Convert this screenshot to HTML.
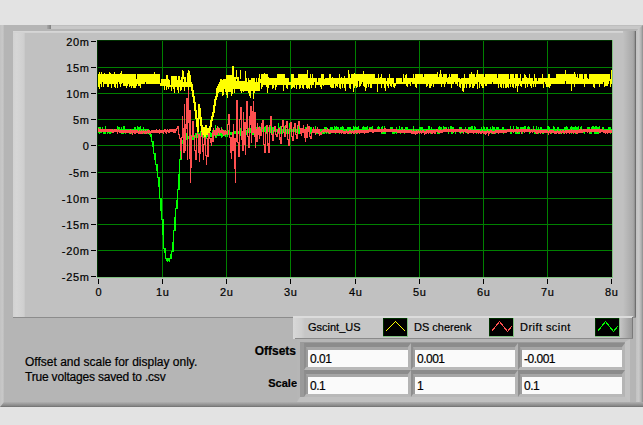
<!DOCTYPE html>
<html><head><meta charset="utf-8">
<style>
html,body{margin:0;padding:0;}
body{-webkit-text-stroke:0.2px #000;width:643px;height:425px;overflow:hidden;position:relative;background:#e3e3e3;font-family:"Liberation Sans",sans-serif;color:#000;}
.abs{position:absolute;}
.yl{position:absolute;left:40px;width:49.7px;text-align:right;font-size:11px;line-height:14px;letter-spacing:0.7px;}
.xl{position:absolute;top:285px;width:41.7px;text-align:center;font-size:11px;line-height:14px;letter-spacing:0.7px;}
.tk{position:absolute;background:#000;}
.lg{position:absolute;top:320px;font-size:11px;line-height:14px;}
.in{position:absolute;background:#fafafa;font-size:12px;line-height:14px;letter-spacing:-0.5px;}
.in span{position:absolute;left:2px;top:2px;}
</style></head><body>
<!-- outer frame -->
<div class="abs" style="left:0;top:25px;width:643px;height:382px;background:#b5b5b5;"></div>
<div class="abs" style="left:0;top:25px;width:4px;height:382px;background:linear-gradient(90deg,#c2c2c2,#c8c8c8 60%,#bdbdbd);"></div>
<div class="abs" style="left:51px;top:25px;width:592px;height:6px;background:linear-gradient(180deg,#bebebe 0,#bebebe 1px,#c8c8c8 1px,#c8c8c8 4px,#b4b4b4 4px,#b4b4b4 6px);"></div>
<div class="abs" style="left:47px;top:25px;width:4px;height:4px;background:linear-gradient(90deg,#a8a8a8,#808080);"></div>
<div class="abs" style="left:636px;top:25px;width:7px;height:382px;background:linear-gradient(90deg,#c2c2c2,#cacaca 40%,#b0b0b0 75%,#8c8c8c);clip-path:polygon(0 6px,7px 0,7px 100%,0 100%);"></div>
<div class="abs" style="left:0;top:402px;width:643px;height:5px;background:linear-gradient(180deg,#b0b0b0,#8a8a8a 70%,#6e6e6e);clip-path:polygon(4px 0,100% 0,100% 100%,0 100%);"></div>
<!-- graph panel -->
<div class="abs" style="left:13px;top:31px;width:623px;height:286px;background:#c1c1c1;"></div>
<div class="abs" style="left:13px;top:31px;width:12px;height:286px;background:linear-gradient(90deg,#d2d2d2,#d6d6d6 30%,#d0d0d0 85%,#c8c8c8);"></div>
<div class="abs" style="left:13px;top:31px;width:616px;height:2px;background:linear-gradient(180deg,#d8d8d8,#d0d0d0);clip-path:polygon(0 0,100% 0,calc(100% - 2px) 100%,0 100%);"></div>
<div class="abs" style="left:623px;top:31px;width:12px;height:286px;background:linear-gradient(90deg,#c1c1c1,#a8a8a8 85%,#8c8c8c);"></div>
<div class="abs" style="left:635px;top:31px;width:1px;height:287px;background:#6f6f6f;"></div>
<div class="abs" style="left:13px;top:317px;width:623px;height:1px;background:#8c8c8c;"></div>
<svg width="643" height="425" style="position:absolute;left:0;top:0">
<rect x="98" y="41" width="514" height="236" fill="#000"/>
<g stroke="#008000" stroke-width="1" shape-rendering="crispEdges">
<line x1="162.5" y1="41" x2="162.5" y2="277"/><line x1="226.5" y1="41" x2="226.5" y2="277"/><line x1="290.5" y1="41" x2="290.5" y2="277"/><line x1="355.5" y1="41" x2="355.5" y2="277"/><line x1="419.5" y1="41" x2="419.5" y2="277"/><line x1="483.5" y1="41" x2="483.5" y2="277"/><line x1="547.5" y1="41" x2="547.5" y2="277"/>
<line x1="98" y1="67.5" x2="612" y2="67.5"/><line x1="98" y1="93.5" x2="612" y2="93.5"/><line x1="98" y1="119.5" x2="612" y2="119.5"/><line x1="98" y1="145.5" x2="612" y2="145.5"/><line x1="98" y1="172.5" x2="612" y2="172.5"/><line x1="98" y1="198.5" x2="612" y2="198.5"/><line x1="98" y1="224.5" x2="612" y2="224.5"/><line x1="98" y1="250.5" x2="612" y2="250.5"/>
</g>
<g shape-rendering="crispEdges">
<path d="M98.5 127V133M99.5 127V134M100.5 127V133M101.5 129V133M102.5 127V132M103.5 129V134M104.5 129V134M105.5 126V134M106.5 129V132M107.5 129V134M108.5 129V133M109.5 129V134M110.5 129V134M111.5 129V133M112.5 129V133M113.5 129V132M114.5 129V132M115.5 129V132M116.5 129V132M117.5 126V134M118.5 127V132M119.5 127V133M120.5 129V132M121.5 127V134M122.5 129V134M123.5 126V134M124.5 126V133M125.5 129V134M126.5 129V133M127.5 129V133M128.5 129V132M129.5 129V134M130.5 129V132M131.5 129V134M132.5 129V134M133.5 129V132M134.5 127V133M135.5 127V134M136.5 129V133M137.5 126V132M138.5 127V132M139.5 127V132M140.5 126V134M141.5 129V133M142.5 129V133M143.5 127V134M144.5 129V134M145.5 129V134M146.5 129V134M147.5 129V134M148.5 129V133M184.5 136V141M185.5 134V141M186.5 133V140M187.5 136V140M188.5 136V139M189.5 135V138M190.5 133V138M191.5 135V138M192.5 135V140M193.5 135V140M194.5 135V140M195.5 133V138M196.5 133V138M197.5 133V138M198.5 127V140M199.5 133V140M200.5 131V138M201.5 132V137M202.5 134V139M203.5 134V138M204.5 134V139M205.5 130V137M206.5 134V139M207.5 132V137M208.5 130V137M209.5 132V139M210.5 132V137M211.5 133V137M212.5 130V138M213.5 130V136M214.5 131V136M215.5 125V138M216.5 133V138M217.5 127V136M218.5 127V136M219.5 131V136M220.5 133V136M221.5 127V138M222.5 129V137M223.5 130V135M224.5 130V136M225.5 132V137M226.5 132V135M227.5 132V137M228.5 130V135M229.5 126V135M230.5 132V135M231.5 132V135M232.5 132V136M233.5 131V134M234.5 131V134M235.5 131V134M236.5 131V134M237.5 129V135M238.5 131V134M239.5 131V136M240.5 128V136M241.5 131V135M242.5 131V134M243.5 131V134M244.5 127V133M245.5 130V135M246.5 130V135M247.5 127V133M248.5 128V133M249.5 128V135M250.5 128V133M251.5 127V133M252.5 130V135M253.5 130V135M254.5 128V135M255.5 127V134M256.5 127V132M257.5 127V134M258.5 129V134M259.5 126V132M260.5 127V132M261.5 126V133M262.5 126V132M263.5 127V134M264.5 127V132M265.5 126V134M266.5 126V134M267.5 126V133M268.5 127V132M269.5 129V132M270.5 126V133M271.5 127V134M272.5 127V134M273.5 127V132M274.5 129V132M275.5 129V132M276.5 129V132M277.5 129V132M278.5 123V134M279.5 127V132M280.5 126V134M281.5 129V133M282.5 129V134M283.5 129V132M284.5 126V132M285.5 129V132M286.5 129V134M287.5 123V133M288.5 129V134M289.5 123V132M290.5 129V132M291.5 127V132M292.5 129V132M293.5 129V132M294.5 126V132M295.5 129V132M296.5 129V133M297.5 127V134M298.5 122V134M299.5 127V134M300.5 129V134M301.5 129V134M302.5 129V132M303.5 129V132M304.5 129V134M305.5 127V132M306.5 127V132M307.5 129V133M308.5 129V132M309.5 129V134M310.5 127V134M311.5 127V134M312.5 129V133M313.5 129V132M314.5 129V132M315.5 126V134M316.5 129V134M317.5 129V134M318.5 129V132M319.5 129V132M320.5 129V132M321.5 129V132M322.5 129V134M323.5 129V134M324.5 127V134M325.5 127V133M326.5 127V134M327.5 129V133M328.5 129V134M329.5 129V133M330.5 127V134M331.5 127V132M332.5 127V132M333.5 129V132M334.5 126V132M335.5 127V134M336.5 126V132M337.5 127V133M338.5 127V132M339.5 129V134M340.5 127V133M341.5 127V133M342.5 126V132M343.5 127V132M344.5 129V132M345.5 129V132M346.5 129V133M347.5 127V132M348.5 127V132M349.5 127V134M350.5 127V134M351.5 129V134M352.5 129V132M353.5 126V132M354.5 127V133M355.5 126V133M356.5 127V134M357.5 127V134M358.5 126V132M359.5 129V132M360.5 129V132M361.5 129V132M362.5 127V133M363.5 126V132M364.5 127V134M365.5 127V132M366.5 127V132M367.5 126V132M368.5 129V132M369.5 127V132M370.5 127V132M371.5 127V132M372.5 126V132M373.5 129V132M374.5 129V132M375.5 129V132M376.5 129V132M377.5 127V132M378.5 126V132M379.5 127V132M380.5 129V132M381.5 127V134M382.5 126V134M383.5 129V134M384.5 126V134M385.5 129V134M386.5 129V132M387.5 129V132M388.5 129V132M389.5 129V132M390.5 127V132M391.5 127V132M392.5 127V134M393.5 129V134M394.5 129V134M395.5 129V133M396.5 127V134M397.5 129V132M398.5 129V132M399.5 126V132M400.5 129V134M401.5 127V132M402.5 127V132M403.5 129V133M404.5 129V134M405.5 127V132M406.5 127V132M407.5 127V132M408.5 129V132M409.5 129V133M410.5 129V132M411.5 129V132M412.5 129V132M413.5 126V132M414.5 129V132M415.5 129V132M416.5 129V132M417.5 129V134M418.5 129V133M419.5 127V132M420.5 127V132M421.5 127V134M422.5 127V132M423.5 129V132M424.5 129V132M425.5 129V132M426.5 129V132M427.5 129V132M428.5 126V132M429.5 126V132M430.5 129V134M431.5 127V134M432.5 129V133M433.5 129V133M434.5 129V133M435.5 129V134M436.5 129V132M437.5 129V134M438.5 127V134M439.5 126V134M440.5 127V132M441.5 127V132M442.5 129V132M443.5 126V132M444.5 127V132M445.5 127V132M446.5 127V132M447.5 129V132M448.5 127V134M449.5 129V132M450.5 126V132M451.5 126V134M452.5 127V134M453.5 127V132M454.5 129V132M455.5 129V134M456.5 129V132M457.5 129V132M458.5 129V132M459.5 127V133M460.5 127V134M461.5 127V133M462.5 129V133M463.5 129V133M464.5 129V132M465.5 127V133M466.5 129V132M467.5 129V134M468.5 127V132M469.5 127V132M470.5 127V132M471.5 126V132M472.5 126V133M473.5 129V132M474.5 126V132M475.5 127V132M476.5 129V134M477.5 129V132M478.5 129V133M479.5 129V132M480.5 129V132M481.5 127V132M482.5 129V132M483.5 126V132M484.5 127V133M485.5 129V132M486.5 127V132M487.5 127V132M488.5 129V132M489.5 129V132M490.5 127V132M491.5 129V134M492.5 126V133M493.5 127V134M494.5 127V132M495.5 129V134M496.5 127V132M497.5 127V132M498.5 127V132M499.5 129V132M500.5 129V133M501.5 129V132M502.5 127V132M503.5 127V134M504.5 129V132M505.5 129V132M506.5 129V132M507.5 129V132M508.5 129V132M509.5 129V132M510.5 126V134M511.5 129V134M512.5 129V132M513.5 126V132M514.5 129V132M515.5 129V134M516.5 126V134M517.5 127V134M518.5 127V134M519.5 129V134M520.5 127V132M521.5 127V134M522.5 127V134M523.5 127V132M524.5 126V132M525.5 126V132M526.5 129V132M527.5 127V132M528.5 126V132M529.5 127V134M530.5 129V132M531.5 129V132M532.5 129V132M533.5 126V132M534.5 129V134M535.5 129V134M536.5 126V132M537.5 129V134M538.5 127V134M539.5 129V132M540.5 127V132M541.5 127V132M542.5 129V134M543.5 129V134M544.5 129V133M545.5 129V132M546.5 129V132M547.5 126V132M548.5 126V134M549.5 127V132M550.5 129V132M551.5 129V134M552.5 129V133M553.5 126V132M554.5 127V133M555.5 129V134M556.5 129V132M557.5 127V133M558.5 127V134M559.5 129V134M560.5 129V134M561.5 129V134M562.5 129V132M563.5 129V134M564.5 127V134M565.5 127V132M566.5 126V132M567.5 127V132M568.5 129V132M569.5 129V133M570.5 127V132M571.5 126V134M572.5 127V133M573.5 127V134M574.5 127V132M575.5 126V134M576.5 127V132M577.5 127V132M578.5 126V132M579.5 129V133M580.5 127V133M581.5 126V132M582.5 129V132M583.5 129V133M584.5 129V134M585.5 129V132M586.5 129V132M587.5 127V132M588.5 127V132M589.5 127V134M590.5 129V134M591.5 127V134M592.5 126V132M593.5 126V132M594.5 127V134M595.5 126V134M596.5 126V134M597.5 127V134M598.5 127V134M599.5 126V132M600.5 129V132M601.5 129V132M602.5 127V132M603.5 127V132M604.5 129V132M605.5 129V132M606.5 129V132M607.5 129V134M608.5 127V132M609.5 127V132M610.5 127V134M611.5 129V132" stroke="#00ff00" stroke-width="1" fill="none"/>
</g>
<path d="M148.5 132V133M149.5 132V135M150.5 134V137M151.5 136V142M152.5 141V147M153.5 146V154M154.5 153V160M155.5 159V165M156.5 164V171M157.5 170V178M158.5 177V187M159.5 186V199M160.5 198V211M161.5 210V220M162.5 219V235M163.5 234V249M164.5 248V253M165.5 252V259M166.5 258V261M167.5 260V262M168.5 258V261M169.5 258V262M170.5 254V259M171.5 251V255M172.5 242V252M173.5 230V243M174.5 217V231M175.5 208V218M176.5 200V209M177.5 189V201M178.5 174V190M179.5 159V175M180.5 148V160M181.5 143V149M182.5 140V144M183.5 138V141M184.5 138V141M185.5 140V141" stroke="#00ff00" stroke-width="1" fill="none" shape-rendering="crispEdges"/><path d="M148.5 132V133M150.5 134V137M152.5 141V147M154.5 153V160M156.5 164V171M158.5 177V187M160.5 198V211M162.5 219V235M164.5 248V253M166.5 258V261M168.5 258V261M170.5 254V259M172.5 242V252M174.5 217V231M176.5 200V209M178.5 174V190M180.5 148V160M182.5 140V144M184.5 138V141" transform="translate(1,0)" stroke="#00ff00" stroke-width="1" fill="none" shape-rendering="crispEdges"/>
<g shape-rendering="crispEdges">
<path d="M98.5 128V132M99.5 129V132M100.5 129V132M101.5 129V132M102.5 129V132M103.5 129V132M104.5 129V132M105.5 129V132M106.5 129V132M107.5 129V132M108.5 129V132M109.5 129V132M110.5 129V132M111.5 129V132M112.5 129V133M113.5 130V133M114.5 129V132M115.5 129V132M116.5 129V132M117.5 130V134M118.5 129V132M119.5 130V133M120.5 130V133M121.5 130V133M122.5 130V133M123.5 130V133M124.5 130V133M125.5 130V133M126.5 130V133M127.5 130V133M128.5 130V133M129.5 130V133M130.5 129V134M131.5 130V133M132.5 130V135M133.5 130V133M134.5 130V134M135.5 130V134M136.5 130V133M137.5 130V133M138.5 131V134M139.5 130V134M140.5 131V134M141.5 130V134M142.5 131V134M143.5 130V133M144.5 131V134M145.5 130V134M146.5 131V134M147.5 130V133M148.5 130V134M149.5 130V133M150.5 131V134M151.5 130V133M152.5 130V133M153.5 130V133M154.5 130V133M155.5 130V133M156.5 129V133M157.5 130V133M158.5 130V133M159.5 129V134M160.5 130V133M161.5 130V133M162.5 130V133M163.5 130V134M164.5 129V132M165.5 129V133M166.5 130V134M167.5 129V132M168.5 130V133M169.5 129V133M170.5 129V132M171.5 129V132M172.5 129V132M173.5 129V133M174.5 129V133M175.5 129V133M323.5 129V133M324.5 129V132M325.5 129V132M326.5 130V133M327.5 128V132M328.5 129V133M329.5 130V134M330.5 130V133M331.5 130V133M332.5 130V133M333.5 130V133M334.5 130V133M335.5 130V133M336.5 129V133M337.5 130V133M338.5 130V133M339.5 130V133M340.5 130V133M341.5 130V134M342.5 130V133M343.5 131V134M344.5 131V134M345.5 131V134M346.5 130V133M347.5 131V134M348.5 131V134M349.5 130V133M350.5 130V133M351.5 131V134M352.5 130V133M353.5 131V134M354.5 130V134M355.5 130V133M356.5 130V134M357.5 130V133M358.5 130V133M359.5 130V134M360.5 130V133M361.5 130V133M362.5 130V133M363.5 130V133M364.5 130V134M365.5 130V133M366.5 130V133M367.5 130V133M368.5 130V133M369.5 128V132M370.5 129V132M371.5 129V132M372.5 129V133M373.5 130V133M374.5 129V132M375.5 129V132M376.5 129V132M377.5 129V132M378.5 129V132M379.5 129V132M380.5 129V132M381.5 129V133M382.5 129V132M383.5 129V132M384.5 128V132M385.5 128V132M386.5 129V132M387.5 129V132M388.5 129V132M389.5 129V132M390.5 129V132M391.5 129V132M392.5 129V132M393.5 129V132M394.5 129V132M395.5 129V132M396.5 129V132M397.5 130V133M398.5 130V133M399.5 130V133M400.5 130V133M401.5 130V133M402.5 129V133M403.5 130V133M404.5 129V133M405.5 130V133M406.5 130V133M407.5 130V133M408.5 130V133M409.5 130V133M410.5 130V133M411.5 130V134M412.5 131V134M413.5 129V134M414.5 131V134M415.5 131V135M416.5 130V134M417.5 131V134M418.5 130V133M419.5 131V134M420.5 130V133M421.5 131V134M422.5 130V133M423.5 130V133M424.5 131V135M425.5 131V134M426.5 130V134M427.5 130V133M428.5 130V134M429.5 130V133M430.5 130V133M431.5 130V134M432.5 130V134M433.5 130V133M434.5 130V134M435.5 130V134M436.5 129V132M437.5 129V132M438.5 130V133M439.5 130V133M440.5 129V133M441.5 130V133M442.5 130V133M443.5 129V132M444.5 129V132M445.5 129V132M446.5 128V132M447.5 129V132M448.5 129V132M449.5 129V132M450.5 129V132M451.5 129V132M452.5 129V132M453.5 129V133M454.5 129V132M455.5 129V132M456.5 129V132M457.5 129V132M458.5 129V132M459.5 129V132M460.5 129V133M461.5 129V132M462.5 129V132M463.5 130V134M464.5 129V132M465.5 129V132M466.5 129V133M467.5 129V133M468.5 130V134M469.5 130V133M470.5 129V133M471.5 130V133M472.5 130V133M473.5 130V134M474.5 130V133M475.5 130V133M476.5 130V133M477.5 130V133M478.5 130V134M479.5 130V133M480.5 131V134M481.5 131V134M482.5 130V133M483.5 131V134M484.5 131V134M485.5 131V135M486.5 131V134M487.5 130V133M488.5 131V136M489.5 131V134M490.5 130V133M491.5 130V133M492.5 131V134M493.5 131V134M494.5 131V134M495.5 130V133M496.5 130V133M497.5 130V133M498.5 130V134M499.5 130V133M500.5 130V133M501.5 130V133M502.5 130V133M503.5 130V133M504.5 130V133M505.5 130V133M506.5 130V133M507.5 129V132M508.5 129V132M509.5 129V132M510.5 129V132M511.5 129V132M512.5 129V132M513.5 130V133M514.5 129V132M515.5 129V132M516.5 129V132M517.5 129V133M518.5 129V132M519.5 129V132M520.5 129V132M521.5 129V134M522.5 129V132M523.5 129V132M524.5 129V133M525.5 129V132M526.5 129V132M527.5 129V132M528.5 129V132M529.5 129V132M530.5 130V133M531.5 129V132M532.5 130V133M533.5 129V132M534.5 129V132M535.5 130V133M536.5 130V134M537.5 130V134M538.5 130V133M539.5 130V133M540.5 130V134M541.5 130V133M542.5 130V133M543.5 130V133M544.5 130V133M545.5 130V133M546.5 130V133M547.5 130V133M548.5 131V135M549.5 130V133M550.5 130V134M551.5 130V133M552.5 130V133M553.5 130V133M554.5 131V134M555.5 131V134M556.5 131V134M557.5 130V133M558.5 131V134M559.5 131V134M560.5 130V133M561.5 131V134M562.5 130V133M563.5 130V133M564.5 131V134M565.5 130V133M566.5 130V134M567.5 130V133M568.5 130V133M569.5 130V134M570.5 130V133M571.5 129V133M572.5 130V133M573.5 130V134M574.5 130V133M575.5 130V133M576.5 130V134M577.5 130V134M578.5 130V133M579.5 129V133M580.5 129V133M581.5 129V133M582.5 130V133M583.5 129V132M584.5 129V132M585.5 129V132M586.5 129V132M587.5 129V133M588.5 129V132M589.5 129V133M590.5 129V132M591.5 129V132M592.5 129V132M593.5 129V132M594.5 129V132M595.5 129V132M596.5 129V132M597.5 129V132M598.5 129V132M599.5 129V133M600.5 129V133M601.5 129V132M602.5 129V132M603.5 130V133M604.5 130V133M605.5 130V134M606.5 130V133M607.5 130V134M608.5 130V133M609.5 130V133M610.5 130V133M611.5 130V133" stroke="#ff5050" stroke-width="1" fill="none"/>
</g>
<path d="M175.5 130V132M176.5 128V131M177.5 126V129M178.5 128V135M179.5 134V139M180.5 138V151M181.5 137V159M182.5 116V138M183.5 128V153M184.5 104V129M185.5 124V151M186.5 98V129M187.5 122V160M188.5 86V123M189.5 110V159M190.5 158V183M191.5 136V168M192.5 121V137M193.5 126V137M194.5 136V151M195.5 150V160M196.5 134V151M197.5 125V135M198.5 134V153M199.5 152V162M200.5 136V154M201.5 128V137M202.5 136V152M203.5 144V160M204.5 128V145M205.5 137V156M206.5 155V165M207.5 138V157M208.5 130V139M209.5 132V139M210.5 138V143M211.5 141V146M212.5 132V142M213.5 128V133M214.5 130V135M215.5 134V137M216.5 128V135M217.5 126V129M218.5 128V133M219.5 132V135M220.5 130V133M221.5 128V131M222.5 130V134M223.5 133V136M224.5 131V135M225.5 130V132M226.5 131V134M227.5 124V135M228.5 114V125M229.5 122V138M230.5 137V153M231.5 150V159M232.5 132V151M233.5 124V139M234.5 138V169M235.5 141V183M236.5 100V142M237.5 114V143M238.5 142V157M239.5 119V145M240.5 107V120M241.5 118V140M242.5 131V151M243.5 112V132M244.5 122V145M245.5 128V155M246.5 101V129M247.5 112V137M248.5 136V148M249.5 116V138M250.5 106V125M251.5 124V143M252.5 111V133M253.5 101V113M254.5 112V137M255.5 136V148M256.5 129V142M257.5 123V130M258.5 127V135M259.5 134V139M260.5 129V136M261.5 123V130M262.5 120V129M263.5 128V145M264.5 144V153M265.5 132V146M266.5 125V133M267.5 132V146M268.5 143V153M269.5 125V144M270.5 116V126M271.5 122V135M272.5 134V141M273.5 130V137M274.5 126V131M275.5 128V135M276.5 134V137M277.5 130V135M278.5 128V133M279.5 132V140M280.5 137V144M281.5 126V138M282.5 120V127M283.5 124V133M284.5 132V137M285.5 125V133M286.5 121V128M287.5 127V140M288.5 139V146M289.5 128V140M290.5 122V129M291.5 126V137M292.5 136V141M293.5 127V137M294.5 123V128M295.5 127V135M296.5 134V139M297.5 125V135M298.5 121V126M299.5 123V129M300.5 128V134M301.5 132V136M302.5 128V133M303.5 125V130M304.5 129V138M305.5 137V142M306.5 128V138M307.5 124V129M308.5 126V132M309.5 131V137M310.5 136V139M311.5 132V137M312.5 129V133M313.5 127V130M314.5 129V133M315.5 132V135M316.5 129V133M317.5 127V130M318.5 129V134M319.5 133V136M320.5 132V135M321.5 131V133M322.5 130V132M323.5 130V131" stroke="#ff5050" stroke-width="1" fill="none" shape-rendering="crispEdges"/><path d="M177.5 126V129M180.5 138V151M183.5 128V153M186.5 98V129M189.5 110V159M192.5 121V137M195.5 150V160M198.5 134V153M201.5 128V137M204.5 128V145M207.5 138V157M210.5 138V143M212.5 132V142M214.5 130V135M216.5 128V135M218.5 128V133M220.5 130V133M222.5 130V134M224.5 131V135M226.5 131V134M228.5 114V125M230.5 137V153M232.5 132V151M234.5 138V169M236.5 100V142M238.5 142V157M240.5 107V120M242.5 131V151M244.5 122V145M246.5 101V129M248.5 136V148M250.5 106V125M252.5 111V133M254.5 112V137M256.5 129V142M258.5 127V135M260.5 129V136M262.5 120V129M264.5 144V153M266.5 125V133M268.5 143V153M270.5 116V126M272.5 134V141M274.5 126V131M276.5 134V137M278.5 128V133M280.5 137V144M282.5 120V127M284.5 132V137M286.5 121V128M288.5 139V146M290.5 122V129M292.5 136V141M294.5 123V128M296.5 134V139M298.5 121V126M300.5 128V134M302.5 128V133M304.5 129V138M306.5 128V138M308.5 126V132M310.5 136V139M312.5 129V133M314.5 129V133M316.5 129V133M318.5 129V134M320.5 132V135M322.5 130V132" transform="translate(1,0)" stroke="#ff5050" stroke-width="1" fill="none" shape-rendering="crispEdges"/>
<g shape-rendering="crispEdges">
<path d="M98.5 74V87M99.5 72V89M100.5 74V84M101.5 72V87M102.5 74V82M103.5 74V87M104.5 73V84M105.5 74V84M106.5 74V84M107.5 74V87M108.5 74V87M109.5 72V84M110.5 73V84M111.5 74V88M112.5 74V84M113.5 74V84M114.5 72V87M115.5 74V88M116.5 74V84M117.5 74V88M118.5 74V82M119.5 74V84M120.5 73V87M121.5 71V84M122.5 74V83M123.5 74V86M124.5 74V86M125.5 74V86M126.5 74V88M127.5 74V86M128.5 74V84M129.5 74V87M130.5 74V86M131.5 74V88M132.5 74V86M133.5 74V88M134.5 74V88M135.5 74V88M136.5 79V86M137.5 74V84M138.5 74V86M139.5 74V86M140.5 74V88M141.5 74V84M142.5 74V84M143.5 74V84M144.5 74V84M145.5 74V82M146.5 74V84M147.5 74V84M148.5 74V84M149.5 74V84M150.5 74V84M151.5 74V84M152.5 74V84M153.5 74V84M154.5 72V84M155.5 74V84M156.5 74V84M157.5 74V84M158.5 74V84M159.5 74V84M160.5 83V86M161.5 79V86M162.5 79V86M163.5 79V86M164.5 79V90M165.5 79V86M166.5 75V90M167.5 75V87M168.5 79V89M169.5 80V87M170.5 85V87M171.5 76V91M172.5 76V87M173.5 76V89M174.5 76V93M175.5 76V87M176.5 76V87M177.5 80V90M178.5 76V87M179.5 76V87M180.5 80V91M181.5 77V90M182.5 73V87M183.5 82V87M184.5 77V91M185.5 77V87M186.5 82V87M187.5 73V87M188.5 73V90M189.5 73V87M190.5 75V87M216.5 88V92M217.5 86V95M218.5 84V92M219.5 82V92M220.5 79V92M221.5 79V92M222.5 83V96M223.5 79V95M224.5 79V89M225.5 79V92M226.5 75V95M227.5 75V98M228.5 75V92M229.5 75V92M230.5 75V92M231.5 75V96M232.5 75V94M233.5 77V89M234.5 77V93M235.5 77V89M236.5 81V89M237.5 77V89M238.5 77V89M239.5 81V89M240.5 81V91M241.5 81V93M242.5 81V91M243.5 81V92M244.5 81V91M245.5 77V91M246.5 78V91M247.5 82V91M248.5 78V93M249.5 82V94M250.5 82V91M251.5 78V91M252.5 78V91M253.5 78V99M254.5 78V93M255.5 82V91M256.5 78V91M257.5 82V91M258.5 78V91M259.5 74V91M260.5 79V83M261.5 74V89M262.5 74V87M263.5 74V85M264.5 73V85M265.5 74V85M266.5 74V87M267.5 74V93M268.5 77V88M269.5 78V85M270.5 78V85M271.5 78V85M272.5 78V89M273.5 78V88M274.5 78V85M275.5 78V90M276.5 78V87M277.5 74V85M278.5 74V85M279.5 74V85M280.5 74V85M281.5 74V85M282.5 74V85M283.5 74V91M284.5 74V85M285.5 78V85M286.5 78V88M287.5 78V89M288.5 78V85M289.5 82V85M290.5 82V85M291.5 74V89M292.5 74V88M293.5 74V87M294.5 78V88M295.5 78V85M296.5 78V89M297.5 78V85M298.5 74V85M299.5 74V89M300.5 74V88M301.5 74V85M302.5 74V88M303.5 74V89M304.5 74V85M305.5 74V85M306.5 74V88M307.5 78V89M308.5 78V88M309.5 78V89M310.5 74V85M311.5 78V88M312.5 74V85M313.5 78V85M314.5 78V82M315.5 78V88M316.5 78V85M317.5 82V85M318.5 78V85M319.5 78V85M320.5 78V87M321.5 74V89M322.5 74V85M323.5 74V86M324.5 79V85M325.5 78V85M326.5 78V85M327.5 78V85M328.5 78V85M329.5 74V85M330.5 74V87M331.5 78V88M332.5 77V88M333.5 78V88M334.5 78V84M335.5 78V88M336.5 78V86M337.5 78V87M338.5 78V84M339.5 74V88M340.5 78V89M341.5 77V84M342.5 78V88M343.5 78V84M344.5 76V88M345.5 78V91M346.5 78V84M347.5 78V84M348.5 70V84M349.5 74V88M350.5 78V89M351.5 74V84M352.5 74V84M353.5 74V92M354.5 73V88M355.5 74V86M356.5 74V88M357.5 74V87M358.5 74V81M359.5 74V87M360.5 74V86M361.5 74V84M362.5 74V82M363.5 71V86M364.5 74V87M365.5 74V91M366.5 74V88M367.5 74V84M368.5 74V87M369.5 74V84M370.5 74V88M371.5 74V88M372.5 74V84M373.5 74V84M374.5 74V84M375.5 78V84M376.5 78V84M377.5 78V84M378.5 74V84M379.5 78V84M380.5 77V84M381.5 74V88M382.5 78V84M383.5 78V84M384.5 78V88M385.5 78V91M386.5 81V84M387.5 78V86M388.5 78V88M389.5 74V84M390.5 78V86M391.5 78V87M392.5 78V84M393.5 78V87M394.5 83V88M395.5 83V86M396.5 78V84M397.5 78V84M398.5 78V84M399.5 78V84M400.5 78V84M401.5 78V84M402.5 82V84M403.5 74V84M404.5 78V84M405.5 75V84M406.5 74V86M407.5 78V87M408.5 78V84M409.5 78V84M410.5 78V86M411.5 78V82M412.5 78V84M413.5 74V84M414.5 78V84M415.5 74V87M416.5 74V88M417.5 74V84M418.5 74V84M419.5 74V84M420.5 74V84M421.5 74V84M422.5 74V84M423.5 77V84M424.5 74V84M425.5 74V84M426.5 74V87M427.5 74V86M428.5 74V84M429.5 74V88M430.5 74V88M431.5 74V86M432.5 74V84M433.5 74V87M434.5 74V84M435.5 74V84M436.5 74V84M437.5 72V84M438.5 77V84M439.5 74V84M440.5 70V84M441.5 74V87M442.5 77V84M443.5 74V84M444.5 74V87M445.5 74V84M446.5 74V82M447.5 78V84M448.5 77V84M449.5 74V84M450.5 77V84M451.5 74V88M452.5 74V84M453.5 74V84M454.5 74V82M455.5 74V84M456.5 74V84M457.5 74V86M458.5 78V82M459.5 78V87M460.5 79V88M461.5 78V84M462.5 78V91M463.5 78V92M464.5 74V88M465.5 78V84M466.5 78V88M467.5 78V84M468.5 78V84M469.5 74V88M470.5 74V87M471.5 72V84M472.5 74V88M473.5 74V88M474.5 74V86M475.5 77V84M476.5 74V84M477.5 74V89M478.5 74V82M479.5 74V88M480.5 74V84M481.5 74V86M482.5 74V88M483.5 74V88M484.5 77V84M485.5 74V86M486.5 74V86M487.5 74V84M488.5 74V84M489.5 74V84M490.5 74V84M491.5 74V84M492.5 74V82M493.5 74V84M494.5 74V84M495.5 74V84M496.5 74V84M497.5 78V84M498.5 74V88M499.5 74V84M500.5 74V87M501.5 74V88M502.5 74V84M503.5 74V88M504.5 74V84M505.5 74V88M506.5 74V88M507.5 74V87M508.5 74V88M509.5 79V84M510.5 74V87M511.5 74V84M512.5 74V87M513.5 74V88M514.5 78V84M515.5 74V88M516.5 74V86M517.5 74V92M518.5 78V86M519.5 78V84M520.5 74V86M521.5 81V87M522.5 78V84M523.5 78V84M524.5 74V84M525.5 75V88M526.5 77V84M527.5 78V87M528.5 78V84M529.5 74V84M530.5 78V86M531.5 78V88M532.5 78V84M533.5 81V87M534.5 74V84M535.5 78V87M536.5 78V84M537.5 81V84M538.5 78V84M539.5 78V84M540.5 78V84M541.5 78V84M542.5 74V84M543.5 78V88M544.5 78V82M545.5 78V84M546.5 78V87M547.5 78V87M548.5 74V87M549.5 74V88M550.5 78V86M551.5 78V84M552.5 78V84M553.5 78V84M554.5 78V84M555.5 78V84M556.5 74V84M557.5 74V84M558.5 74V84M559.5 74V84M560.5 74V84M561.5 74V84M562.5 74V84M563.5 74V84M564.5 74V84M565.5 70V81M566.5 74V84M567.5 74V84M568.5 74V84M569.5 74V84M570.5 74V84M571.5 74V91M572.5 74V84M573.5 74V84M574.5 72V87M575.5 74V84M576.5 77V84M577.5 74V84M578.5 78V84M579.5 74V84M580.5 74V84M581.5 74V84M582.5 74V84M583.5 79V84M584.5 74V87M585.5 74V84M586.5 74V84M587.5 78V84M588.5 79V84M589.5 74V84M590.5 74V84M591.5 74V84M592.5 74V84M593.5 74V87M594.5 74V88M595.5 74V84M596.5 74V84M597.5 74V84M598.5 74V84M599.5 74V87M600.5 74V84M601.5 74V84M602.5 74V84M603.5 74V82M604.5 74V87M605.5 74V86M606.5 74V86M607.5 74V86M608.5 74V84M609.5 74V81M610.5 79V87M611.5 79V84M182.5 70V79M183.5 71V79M188.5 70V79M189.5 71V79M232.5 66V79M233.5 66V79M236.5 70V79M240.5 70V79M245.5 71V79M307.5 70V79M477.5 70V79M611.5 70V79M377.5 80V92M250.5 80V98M249.5 80V96M253.5 80V97M178.5 80V93" stroke="#ffff00" stroke-width="1" fill="none"/>
</g>
<path d="M188.5 80V82M189.5 81V83M190.5 82V85M191.5 84V91M192.5 90V97M193.5 96V103M194.5 102V111M195.5 110V119M196.5 118V127M197.5 118V132M198.5 104V119M199.5 108V118M200.5 117V126M201.5 125V132M202.5 130V135M203.5 127V133M204.5 130V137M205.5 125V131M206.5 130V135M207.5 128V132M208.5 130V133M209.5 126V131M210.5 120V127M211.5 116V121M212.5 112V117M213.5 105V113M214.5 99V106M215.5 96V100M216.5 92V97M217.5 89V93M218.5 86V90M219.5 84V87M220.5 83V85M221.5 81V84M222.5 80V82" stroke="#ffff00" stroke-width="1" fill="none" shape-rendering="crispEdges"/><path d="M188.5 80V82M189.5 81V83M190.5 82V85M191.5 84V91M192.5 90V97M193.5 96V103M194.5 102V111M195.5 110V119M196.5 118V127M197.5 118V132M198.5 104V119M199.5 108V118M200.5 117V126M201.5 125V132M202.5 130V135M203.5 127V133M204.5 130V137M205.5 125V131M206.5 130V135M207.5 128V132M208.5 130V133M209.5 126V131M210.5 120V127M211.5 116V121M212.5 112V117M213.5 105V113M214.5 99V106M215.5 96V100M216.5 92V97M217.5 89V93M218.5 86V90M219.5 84V87M220.5 83V85M221.5 81V84M222.5 80V82" transform="translate(1,0)" stroke="#ffff00" stroke-width="1" fill="none" shape-rendering="crispEdges"/>
<g shape-rendering="crispEdges">
<rect x="97" y="40" width="516" height="1" fill="#003000"/>
<rect x="97" y="40" width="1" height="238" fill="#003000"/>
<rect x="97" y="277" width="516" height="1" fill="#80c080"/>
<rect x="612" y="40" width="1" height="238" fill="#80c080"/>
</g>
</svg>
<div class="yl" style="top:35px">20m</div><div class="tk" style="left:91px;top:41px;width:5px;height:1px"></div><div class="yl" style="top:61px">15m</div><div class="tk" style="left:91px;top:67px;width:5px;height:1px"></div><div class="yl" style="top:87px">10m</div><div class="tk" style="left:91px;top:93px;width:5px;height:1px"></div><div class="yl" style="top:113px">5m</div><div class="tk" style="left:91px;top:119px;width:5px;height:1px"></div><div class="yl" style="top:139px">0</div><div class="tk" style="left:91px;top:145px;width:5px;height:1px"></div><div class="yl" style="top:166px">-5m</div><div class="tk" style="left:91px;top:172px;width:5px;height:1px"></div><div class="yl" style="top:192px">-10m</div><div class="tk" style="left:91px;top:198px;width:5px;height:1px"></div><div class="yl" style="top:218px">-15m</div><div class="tk" style="left:91px;top:224px;width:5px;height:1px"></div><div class="yl" style="top:244px">-20m</div><div class="tk" style="left:91px;top:250px;width:5px;height:1px"></div><div class="yl" style="top:270px">-25m</div><div class="tk" style="left:91px;top:276px;width:5px;height:1px"></div>
<div class="xl" style="left:78px">0</div><div class="tk" style="left:98px;top:279px;width:1px;height:5px"></div><div class="xl" style="left:142px">1u</div><div class="tk" style="left:162px;top:279px;width:1px;height:5px"></div><div class="xl" style="left:206px">2u</div><div class="tk" style="left:226px;top:279px;width:1px;height:5px"></div><div class="xl" style="left:270px">3u</div><div class="tk" style="left:290px;top:279px;width:1px;height:5px"></div><div class="xl" style="left:335px">4u</div><div class="tk" style="left:355px;top:279px;width:1px;height:5px"></div><div class="xl" style="left:399px">5u</div><div class="tk" style="left:419px;top:279px;width:1px;height:5px"></div><div class="xl" style="left:463px">6u</div><div class="tk" style="left:483px;top:279px;width:1px;height:5px"></div><div class="xl" style="left:527px">7u</div><div class="tk" style="left:547px;top:279px;width:1px;height:5px"></div><div class="xl" style="left:591px">8u</div><div class="tk" style="left:611px;top:279px;width:1px;height:5px"></div>
<!-- legend -->
<div class="abs" style="left:293px;top:316px;width:340px;height:23px;background:#c6c6c6;"></div>
<div class="abs" style="left:293px;top:316px;width:12px;height:23px;background:linear-gradient(90deg,#d8d8d8,#cfcfcf 70%,#c6c6c6);"></div>
<div class="abs" style="left:293px;top:316px;width:340px;height:2px;background:#dcdcdc;"></div>
<div class="abs" style="left:620px;top:318px;width:12px;height:21px;background:linear-gradient(90deg,#c6c6c6,#9a9a9a);"></div><div class="abs" style="left:632px;top:317px;width:1px;height:22px;background:#7a7a7a;"></div>
<div class="abs" style="left:295px;top:338px;width:338px;height:1px;background:#8a8a8a;"></div>
<div class="lg" style="left:308px">Gscint_US</div>
<div class="lg" style="left:414px">DS cherenk</div>
<div class="lg" style="left:520px;letter-spacing:0.45px">Drift scint</div>
<svg style="position:absolute;left:383px;top:318px" width="25" height="19" shape-rendering="crispEdges">
<rect x="0" y="0" width="25" height="19" fill="#000"/>
<rect x="0" y="0" width="25" height="1" fill="#003000"/><rect x="0" y="0" width="1" height="19" fill="#003000"/>
<rect x="0" y="18" width="25" height="1" fill="#80c080"/><rect x="24" y="0" width="1" height="19" fill="#80c080"/>
<polyline points="2.5,13.5 12.5,3.5 22.5,13.5" fill="none" stroke="#ffff00" stroke-width="1.2"/>
</svg><svg style="position:absolute;left:489px;top:318px" width="25" height="19" shape-rendering="crispEdges">
<rect x="0" y="0" width="25" height="19" fill="#000"/>
<rect x="0" y="0" width="25" height="1" fill="#003000"/><rect x="0" y="0" width="1" height="19" fill="#003000"/>
<rect x="0" y="18" width="25" height="1" fill="#80c080"/><rect x="24" y="0" width="1" height="19" fill="#80c080"/>
<polyline points="2.5,13.5 10.5,3.5 18.5,13.5 22.5,8.5" fill="none" stroke="#ff5050" stroke-width="1.2"/>
</svg><svg style="position:absolute;left:595px;top:318px" width="25" height="19" shape-rendering="crispEdges">
<rect x="0" y="0" width="25" height="19" fill="#000"/>
<rect x="0" y="0" width="25" height="1" fill="#003000"/><rect x="0" y="0" width="1" height="19" fill="#003000"/>
<rect x="0" y="18" width="25" height="1" fill="#80c080"/><rect x="24" y="0" width="1" height="19" fill="#80c080"/>
<polyline points="2.5,13.5 10.5,3.5 18.5,13.5 22.5,8.5" fill="none" stroke="#00ff00" stroke-width="1.2"/>
</svg>
<!-- note -->
<div class="abs" style="left:25px;top:355px;font-size:12px;line-height:15px;">Offset and scale for display only.<br><span style="letter-spacing:-0.19px">True voltages saved to .csv</span></div>
<div class="abs" style="left:200px;top:344px;width:96px;text-align:right;font-size:12px;font-weight:bold;line-height:14px;">Offsets</div>
<div class="abs" style="left:200px;top:376px;width:97px;text-align:right;font-size:11px;font-weight:bold;line-height:14px;">Scale</div>
<!-- array -->
<div class="abs" style="box-sizing:border-box;left:297px;top:339px;width:333px;height:63px;background:#a0a0a0;border-top:3px solid #b6b6b6;border-left:3px solid #b6b6b6;border-right:5px solid #c2c2c2;border-bottom:5px solid #c0c0c0;"></div>
<div class="abs" style="left:300px;top:342px;width:325px;height:55px;background:#9a9a9a;"></div>
<div class="abs" style="box-sizing:border-box;left:304px;top:343px;width:107px;height:27px;border-top:4px solid #8c8c8c;border-left:2px solid #8e8e8e;border-right:3px solid #b4b4b4;border-bottom:3px solid #b8b8b8;"><div class="in" style="position:absolute;left:0;top:0;right:0;bottom:0;border-top:3px solid #a6a6a6;border-left:2px solid #9c9c9c;background:#fafafa;"><span>0.01</span></div></div><div class="abs" style="box-sizing:border-box;left:411px;top:343px;width:107px;height:27px;border-top:4px solid #8c8c8c;border-left:2px solid #8e8e8e;border-right:3px solid #b4b4b4;border-bottom:3px solid #b8b8b8;"><div class="in" style="position:absolute;left:0;top:0;right:0;bottom:0;border-top:3px solid #a6a6a6;border-left:2px solid #9c9c9c;background:#fafafa;"><span>0.001</span></div></div><div class="abs" style="box-sizing:border-box;left:518px;top:343px;width:107px;height:27px;border-top:4px solid #8c8c8c;border-left:2px solid #8e8e8e;border-right:3px solid #b4b4b4;border-bottom:3px solid #b8b8b8;"><div class="in" style="position:absolute;left:0;top:0;right:0;bottom:0;border-top:3px solid #a6a6a6;border-left:2px solid #9c9c9c;background:#fafafa;"><span>-0.001</span></div></div><div class="abs" style="box-sizing:border-box;left:304px;top:370px;width:107px;height:27px;border-top:4px solid #8c8c8c;border-left:2px solid #8e8e8e;border-right:3px solid #b4b4b4;border-bottom:3px solid #b8b8b8;"><div class="in" style="position:absolute;left:0;top:0;right:0;bottom:0;border-top:3px solid #a6a6a6;border-left:2px solid #9c9c9c;background:#fafafa;"><span>0.1</span></div></div><div class="abs" style="box-sizing:border-box;left:411px;top:370px;width:107px;height:27px;border-top:4px solid #8c8c8c;border-left:2px solid #8e8e8e;border-right:3px solid #b4b4b4;border-bottom:3px solid #b8b8b8;"><div class="in" style="position:absolute;left:0;top:0;right:0;bottom:0;border-top:3px solid #a6a6a6;border-left:2px solid #9c9c9c;background:#fafafa;"><span>1</span></div></div><div class="abs" style="box-sizing:border-box;left:518px;top:370px;width:107px;height:27px;border-top:4px solid #8c8c8c;border-left:2px solid #8e8e8e;border-right:3px solid #b4b4b4;border-bottom:3px solid #b8b8b8;"><div class="in" style="position:absolute;left:0;top:0;right:0;bottom:0;border-top:3px solid #a6a6a6;border-left:2px solid #9c9c9c;background:#fafafa;"><span>0.1</span></div></div>
</body></html>
